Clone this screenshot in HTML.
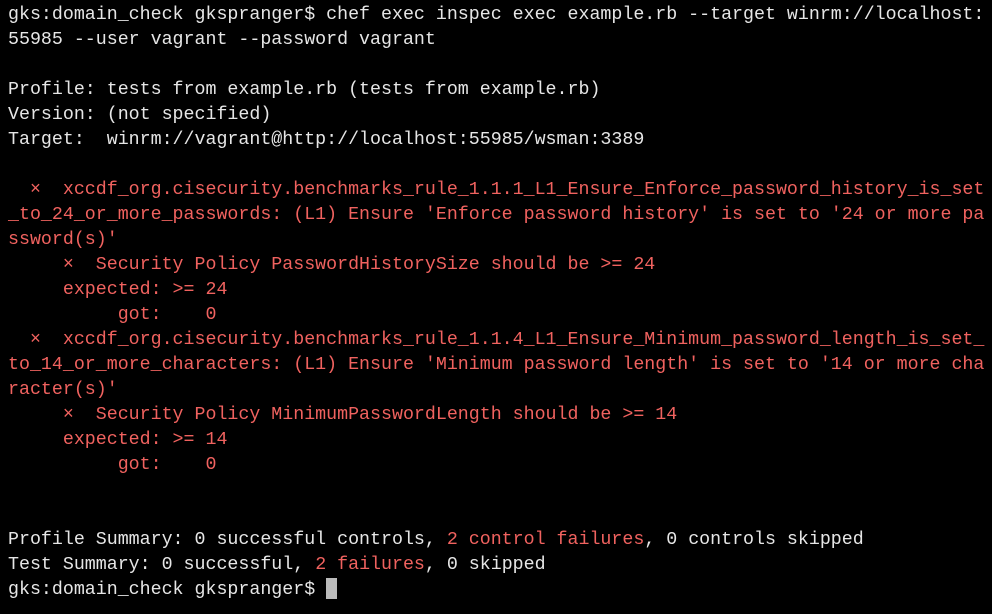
<!DOCTYPE html>
<html><head><style>
html,body{margin:0;padding:0;background:#000;width:992px;height:614px;overflow:hidden}
pre{margin:0;padding:3px 0 0 8px;font-family:"Liberation Mono",monospace;font-size:18.3px;line-height:25px;color:#e6e6e6;white-space:pre}
.r{color:#f0625f}
.c{display:inline-block;width:11px;height:21px;background:#bbb;vertical-align:-5px}
</style></head><body><pre>gks:domain_check gkspranger$ chef exec inspec exec example.rb --target winrm://localhost:
55985 --user vagrant --password vagrant

Profile: tests from example.rb (tests from example.rb)
Version: (not specified)
Target:  winrm://vagrant@http://localhost:55985/wsman:3389

<span class="r">  ×  xccdf_org.cisecurity.benchmarks_rule_1.1.1_L1_Ensure_Enforce_password_history_is_set
_to_24_or_more_passwords: (L1) Ensure 'Enforce password history' is set to '24 or more pa
ssword(s)'
     ×  Security Policy PasswordHistorySize should be &gt;= 24
     expected: &gt;= 24
          got:    0
  ×  xccdf_org.cisecurity.benchmarks_rule_1.1.4_L1_Ensure_Minimum_password_length_is_set_
to_14_or_more_characters: (L1) Ensure 'Minimum password length' is set to '14 or more cha
racter(s)'
     ×  Security Policy MinimumPasswordLength should be &gt;= 14
     expected: &gt;= 14
          got:    0</span>


Profile Summary: 0 successful controls, <span class="r">2 control failures</span>, 0 controls skipped
Test Summary: 0 successful, <span class="r">2 failures</span>, 0 skipped
gks:domain_check gkspranger$ <span class="c"></span></pre></body></html>
